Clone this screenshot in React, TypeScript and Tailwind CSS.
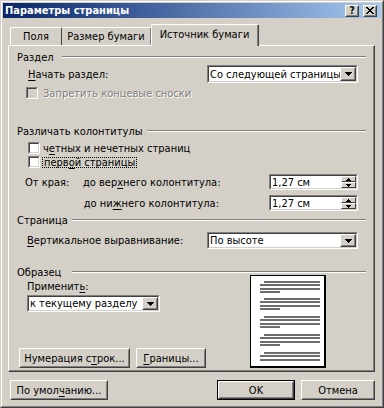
import React from "react";

type P = { className?: string; innerClass?: string; children?: React.ReactNode };

function Raised({ className = "", innerClass = "", children }: P) {
  return (
    <div className={`border border-t-white border-l-white border-r-[#404040] border-b-[#404040] ${className}`}>
      <div className={`h-full w-full border border-t-[#D4D0C8] border-l-[#D4D0C8] border-r-[#808080] border-b-[#808080] ${innerClass}`}>
        {children}
      </div>
    </div>
  );
}

function Sunken({ className = "", innerClass = "", children }: P) {
  return (
    <div className={`border border-t-[#808080] border-l-[#808080] border-r-white border-b-white ${className}`}>
      <div className={`h-full w-full border border-t-[#404040] border-l-[#404040] border-r-[#D4D0C8] border-b-[#D4D0C8] ${innerClass}`}>
        {children}
      </div>
    </div>
  );
}

function DownArrow() {
  return (
    <svg width="7" height="4" viewBox="0 0 7 4" shapeRendering="crispEdges">
      <path d="M0 0H7V1H6V2H5V3H4V4H3V3H2V2H1V1H0Z" fill="#000" />
    </svg>
  );
}

function SpinUp() {
  return (
    <svg width="5" height="3" viewBox="0 0 5 3" shapeRendering="crispEdges">
      <path d="M2 0H3V1H4V2H5V3H0V2H1V1H2Z" fill="#000" />
    </svg>
  );
}

function SpinDown() {
  return (
    <svg width="5" height="3" viewBox="0 0 5 3" shapeRendering="crispEdges">
      <path d="M0 0H5V1H4V2H3V3H2V2H1V1H0Z" fill="#000" />
    </svg>
  );
}

function Select({ text, className = "" }: { text: string; className?: string }) {
  return (
    <Sunken className={className} innerClass="bg-white flex">
      <div className="flex-1 min-w-0 overflow-hidden whitespace-nowrap pl-px flex items-center">{text}</div>
      <Raised className="w-4 h-full shrink-0" innerClass="flex items-center justify-center bg-[#D4D0C8]">
        <DownArrow />
      </Raised>
    </Sunken>
  );
}

function SpinBtn({ children }: { children: React.ReactNode }) {
  return (
    <div className="flex-1 border border-t-white border-l-white border-r-[#404040] border-b-[#404040] bg-[#D4D0C8] flex items-center justify-center">
      {children}
    </div>
  );
}

function Spin({ value }: { value: string }) {
  return (
    <Sunken className="w-[89px] h-[16px]" innerClass="bg-white flex">
      <div className="flex-1 pl-px flex items-center whitespace-nowrap">{value}</div>
      <div className="w-[15px] h-full flex flex-col shrink-0">
        <SpinBtn>
          <SpinUp />
        </SpinBtn>
        <SpinBtn>
          <SpinDown />
        </SpinBtn>
      </div>
    </Sunken>
  );
}

function Check({ disabled = false }: { disabled?: boolean }) {
  return (
    <Sunken className="w-[12px] h-[12px] shrink-0" innerClass={disabled ? "bg-[#D4D0C8]" : "bg-white"} />
  );
}

function Heading({ label, labelClass }: { label: string; labelClass: string }) {
  return (
    <div className="h-[14px] flex items-center pl-[8px] pr-[7px]">
      <div className={`${labelClass} whitespace-nowrap`}>{label}</div>
      <div className="flex-1 flex flex-col">
        <div className="h-px bg-[#808080]" />
        <div className="h-px bg-white" />
      </div>
    </div>
  );
}

function U({ children }: { children: React.ReactNode }) {
  return <span className="underline underline-offset-2">{children}</span>;
}

function Button({ className = "", children }: P) {
  return (
    <Raised className={className} innerClass="flex items-center justify-center whitespace-nowrap">
      {children}
    </Raised>
  );
}

function Preview() {
  const starts = [5, 22, 40, 58, 76];
  const lines: React.ReactNode[] = [];
  starts.forEach((y, i) => {
    lines.push(<rect key={`a${i}`} x={13} y={y} width={56} height={2} fill="#6e6e6e" />);
    lines.push(<rect key={`b${i}`} x={9} y={y + 3} width={60} height={2} fill="#6e6e6e" />);
    lines.push(<rect key={`c${i}`} x={9} y={y + 7} width={60} height={2} fill="#6e6e6e" />);
    if (i < 4) lines.push(<rect key={`d${i}`} x={9} y={y + 10} width={20} height={2} fill="#6e6e6e" />);
  });
  return (
    <div className="w-[76px] h-[93px] border-l border-t border-l-black border-t-black border-r-2 border-b-2 border-r-black border-b-black bg-white">
      <svg width="73" height="90" viewBox="0 0 73 90" shapeRendering="crispEdges">
        {lines}
      </svg>
    </div>
  );
}

export default function App() {
  return (
    <div className="w-[384px] h-[408px] bg-[#D4D0C8] border border-t-[#D4D0C8] border-l-[#D4D0C8] border-r-[#404040] border-b-[#404040] font-['DejaVu_Sans_Condensed','DejaVu_Sans',sans-serif] text-[11px] text-black leading-none select-none">
      <div className="h-full border border-t-white border-l-white border-r-[#808080] border-b-[#808080] p-px flex flex-col">
        {/* Title bar */}
        <div className="h-[15px] shrink-0 bg-linear-to-r from-[#0A246A] to-[#A6CAF0] flex items-center pl-[2px] pr-[4px]">
          <span className="font-bold text-white flex-1 whitespace-nowrap">Параметры страницы</span>
          <Raised className="w-[14px] h-[12px]" innerClass="flex items-center justify-center bg-[#D4D0C8]">
            <span className="font-bold text-[10px]">?</span>
          </Raised>
          <Raised className="w-[14px] h-[12px] ml-[4px]" innerClass="flex items-center justify-center bg-[#D4D0C8]">
            <svg width="8" height="7" viewBox="0 0 8 7" shapeRendering="crispEdges">
              <path d="M0 0H2V1H3V2H5V1H6V0H8V1H7V2H6V3H5V4H6V5H7V6H8V7H6V6H5V5H3V6H2V7H0V6H1V5H2V4H3V3H2V2H1V1H0Z" fill="#000" />
            </svg>
          </Raised>
        </div>

        {/* Tabs + panel */}
        <div className="ml-[5px] w-[367px] mt-[6px]">
          <div className="flex items-end h-[21px] pl-[2px]">
            <div className="w-[52px] h-[18px] border-l border-t border-l-white border-t-white border-r border-r-[#404040] rounded-t-[2px] flex items-center justify-center">
              Поля
            </div>
            <div className="w-[90px] h-[18px] border-t border-t-white border-r border-r-[#404040] rounded-t-[2px] flex items-center justify-center">
              <div className="h-full w-full border-r border-r-[#808080] flex items-center justify-center">Размер бумаги</div>
            </div>
            <div className="relative z-10 -ml-px -mb-px w-[108px] h-[22px] bg-[#D4D0C8] border-l border-t border-l-white border-t-white border-r border-r-[#404040] rounded-t-[2px]">
              <div className="h-full w-full border-r border-r-[#808080] flex items-center justify-center pb-[2px]">
                Источник бумаги
              </div>
            </div>
          </div>

          <div className="h-[327px] border-l border-t border-l-white border-t-white border-r border-b border-r-[#404040] border-b-[#404040]">
            <div className="h-full border-r border-b border-r-[#808080] border-b-[#808080] flex flex-col">
              <div className="mt-[4px]">
                <Heading label="Раздел" labelClass="w-[45px]" />
              </div>
              <div className="mt-px h-[18px] flex items-center">
                <div className="w-[198px] pl-[19px]">
                  <U>Н</U>ачать раздел:
                </div>
                <Select text="Со следующей страницы" className="w-[151px] h-[18px]" />
              </div>
              <div className="mt-[3px] h-[14px] flex items-center pl-[17px] gap-[5px]">
                <Check disabled />
                <span className="text-[#808080] [text-shadow:1px_1px_0_#fff]">Запретить концевые сноски</span>
              </div>

              <div className="mt-[24px]">
                <Heading label="Различать колонтитулы" labelClass="w-[130px]" />
              </div>
              <div className="mt-[3px] h-[14px] flex items-center pl-[19px] gap-[3px]">
                <Check />
                <span>
                  ч<U>е</U>тных и нечетных страниц
                </span>
              </div>
              <div className="h-[14px] flex items-center pl-[19px] gap-[2px]">
                <Check />
                <span className="h-[11px] border border-dotted border-black flex items-center px-px">
                  перв<U>о</U>й страницы
                </span>
              </div>
              <div className="mt-[5px] h-[16px] flex items-center">
                <div className="w-[74px] pl-[16px]">От края:</div>
                <div className="w-[136px] text-right whitespace-nowrap">
                  до вер<U>х</U>него колонтитула:
                </div>
                <div className="w-[50px]" />
                <Spin value="1,27 см" />
              </div>
              <div className="mt-[5px] h-[16px] flex items-center">
                <div className="w-[74px]" />
                <div className="w-[136px] text-right whitespace-nowrap">
                  до ни<U>ж</U>него колонтитула:
                </div>
                <div className="w-[50px]" />
                <Spin value="1,27 см" />
              </div>

              <div className="mt-[2px]">
                <Heading label="Страница" labelClass="w-[55px]" />
              </div>
              <div className="mt-[5px] h-[17px] flex items-center">
                <div className="w-[198px] pl-[18px]">
                  <U>В</U>ертикальное выравнивание:
                </div>
                <Select text="По высоте" className="w-[151px] h-[17px]" />
              </div>

              <div className="mt-[16px]">
                <Heading label="Образец" labelClass="w-[55px]" />
              </div>
              <div className="-mt-[4px] flex">
                <div className="w-[241px] flex flex-col">
                  <div className="mt-[4px] h-[14px] flex items-center pl-[18px]">
                    Применит<U>ь</U>:
                  </div>
                  <Select text="к текущему разделу" className="mt-[2px] ml-[18px] w-[133px] h-[17px]" />
                  <div className="mt-[36px] ml-[10px] flex gap-[6px]">
                    <Button className="w-[111px] h-[20px]">
                      <span>
                        Нумерация с<U>т</U>рок...
                      </span>
                    </Button>
                    <Button className="w-[70px] h-[20px]">
                      <span>
                        <U>Г</U>раницы...
                      </span>
                    </Button>
                  </div>
                </div>
                <Preview />
              </div>
            </div>
          </div>
        </div>

        {/* Bottom buttons */}
        <div className="mt-[8px] h-[20px] flex pl-[7px] pr-[6px]">
          <Button className="w-[98px] h-[20px]">
            <span>
              По умол<U>ч</U>анию...
            </span>
          </Button>
          <div className="flex-1" />
          <div className="w-[78px] h-[20px] border border-black">
            <Button className="w-full h-full">OK</Button>
          </div>
          <Button className="ml-[6px] w-[74px] h-[20px]">Отмена</Button>
        </div>
      </div>
    </div>
  );
}
